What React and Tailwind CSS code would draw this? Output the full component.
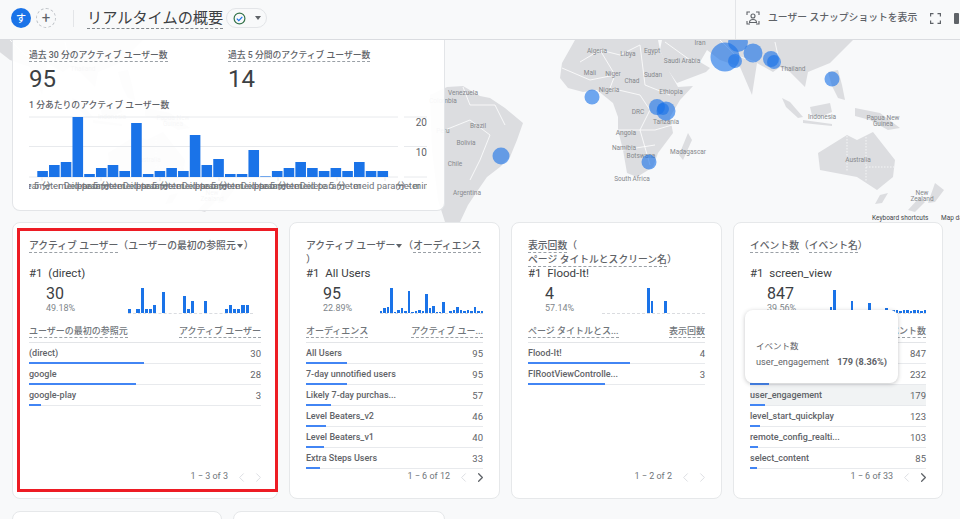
import { ChevronLeft, ChevronRight } from "lucide-react";

const perMinute = [2, 4, 5, 20, 1, 3, 4, 2, 18, 1, 2, 3, 2, 14, 4, 6, 1, 1, 9, 0, 2, 3, 5, 3, 2, 3, 2, 5, 2, 2];
const ticks = [42, 101, 160, 219, 278, 337];

const cards = [
  {
    title: (
      <>
        <Dotted>アクティブ ユーザー</Dotted>（ユーザーの最初の参照元<Caret />）
      </>
    ),
    top: "(direct)",
    value: "30",
    pct: "49.18%",
    spark: [4, 0, 4, 25, 4, 4, 8, 0, 21, 0, 0, 0, 0, 17, 4, 12, 0, 0, 12, 0, 0, 0, 0, 4, 8, 4, 4, 8, 8, 0],
    sparkClass: "w-[125px] mr-[8px]",
    colA: "ユーザーの最初の参照元",
    colB: "アクティブ ユーザー",
    rows: [
      ["(direct)", "30", 115],
      ["google", "28", 107],
      ["google-play", "3", 12],
    ],
    range: "1 − 3 of 3",
    more: false,
  },
  {
    title: (
      <>
        アクティブ ユーザー
        <Caret />（<Dotted>オーディエンス</Dotted>
        <br />）
      </>
    ),
    top: "All Users",
    value: "95",
    pct: "22.89%",
    spark: [2, 5, 6, 25, 1, 3, 5, 2, 22, 1, 2, 3, 2, 19, 5, 7, 1, 1, 11, 0, 2, 3, 6, 3, 2, 3, 2, 6, 2, 2],
    sparkClass: "w-[103px]",
    colA: "オーディエンス",
    colB: "アクティブ ユー...",
    rows: [
      ["All Users", "95", 41],
      ["7-day unnotified users", "95", 41],
      ["Likely 7-day purchas...", "57", 25],
      ["Level Beaters_v2", "46", 20],
      ["Level Beaters_v1", "40", 18],
      ["Extra Steps Users", "33", 14],
    ],
    range: "1 − 6 of 12",
    more: true,
  },
  {
    title: (
      <>
        <Dotted>表示回数</Dotted>（
        <br />
        <Dotted>ページ タイトルとスクリーン名</Dotted>）
      </>
    ),
    top: "Flood-It!",
    value: "4",
    pct: "57.14%",
    spark: [0, 0, 0, 0, 0, 0, 0, 0, 0, 0, 0, 0, 0, 25, 12, 0, 0, 0, 12, 0, 0, 0, 0, 0, 0, 0, 0, 0, 0, 0],
    sparkClass: "w-[103px]",
    colA: "ページ タイトルとス...",
    colB: "表示回数",
    rows: [
      ["Flood-It!", "4", 102],
      ["FIRootViewControlle...", "3", 77],
    ],
    range: "1 − 2 of 2",
    more: false,
  },
  {
    title: (
      <>
        <Dotted>イベント数</Dotted>（<Dotted>イベント名</Dotted>）
      </>
    ),
    top: "screen_view",
    value: "847",
    pct: "39.56%",
    spark: [0, 0, 6, 23, 1, 1, 1, 1, 12, 1, 1, 1, 1, 10, 1, 1, 1, 1, 5, 1, 3, 3, 2, 3, 3, 2, 3, 3, 2, 3],
    sparkClass: "w-[103px]",
    colA: "イベント名",
    colB: "イベント数",
    rows: [
      ["screen_view", "847", 60],
      ["session_start", "232", 19],
      ["user_engagement", "179", 15, true],
      ["level_start_quickplay", "123", 10],
      ["remote_config_realti...", "103", 8],
      ["select_content", "85", 7],
    ],
    range: "1 − 6 of 33",
    more: true,
  },
];

function Dotted({ children }) {
  return <span className="border-b border-dashed border-[#9aa0a6] pb-[1px]">{children}</span>;
}

function Caret() {
  return <span className="inline-block w-0 h-0 mx-[1px] align-middle border-x-[3px] border-x-transparent border-t-[4px] border-t-[#5f6368]" />;
}

function MapLand() {
  const labels = [
    ["Algeria", 597, 50], ["Libya", 628, 53], ["Egypt", 652, 50], ["Saudi Arabia", 682, 60], ["Iran", 700, 42],
    ["Mali", 590, 72], ["Niger", 613, 73], ["Chad", 632, 80], ["Sudan", 653, 74], ["Nigeria", 609, 89],
    ["Ethiopia", 671, 91], ["DRC", 638, 111], ["Tanzania", 666, 121], ["Angola", 626, 132], ["Namibia", 624, 147],
    ["Botswana", 641, 155], ["Madagascar", 688, 151], ["South Africa", 632, 178], ["Indonesia", 822, 116],
    ["Papua New", 883, 117], ["Guinea", 883, 123], ["Thailand", 793, 68], ["Australia", 858, 159],
    ["New", 922, 192], ["Zealand", 922, 198], ["Brazil", 478, 125], ["Venezuela", 463, 92], ["Colombia", 443, 100],
    ["Peru", 443, 130], ["Bolivia", 466, 142], ["Chile", 455, 163], ["Argentina", 467, 192],
  ];
  return (
    <>
      <g fill="#dcdde0" stroke="none">
        {/* south america */}
        <polygon points="430,95 447,87 463,86 480,96 490,98 505,108 523,123 517,140 510,157 500,167 487,177 478,190 468,205 460,222 445,222 438,200 432,150" />
        {/* africa */}
        <polygon points="575,40 562,63 560,78 568,88 583,92 597,90 613,103 618,117 618,130 623,150 627,173 637,177 653,167 658,153 673,133 670,117 680,100 693,86 678,87 670,73 660,50 658,40" />
        <polygon points="688,133 692,140 683,160 679,155" />
        {/* middle east and asia */}
        <polygon points="662,40 853,40 830,63 808,72 805,87 790,72 780,67 773,72 757,63 752,95 740,67 720,60 707,50 700,62 710,68 706,72 677,83 668,70 660,50" />
        {/* islands */}
        <polygon points="782,98 790,102 803,117 798,118 786,107" />
        <polygon points="810,107 830,103 832,112 820,117 812,115" />
        <polygon points="803,120 832,124 832,126 803,123" />
        <polygon points="828,72 838,70 842,85 845,100 838,98 832,86" />
        <polygon points="855,108 880,113 900,128 888,130 870,120 855,116" />
        <polygon points="818,153 847,135 857,140 873,132 895,160 893,177 877,190 857,177 820,170" />
        <polygon points="880,195 888,193 882,203 875,204" />
        <polygon points="935,183 944,190 935,202 928,203" />
        <polygon points="919,198 925,202 915,212 908,210" />
      </g>
      <g fill="none" stroke="#ffffff" strokeWidth="0.8">
        <polyline points="445,130 470,120 490,135 480,160 470,180" />
        <polyline points="463,87 470,105 495,105 505,125" />
        <polyline points="580,62 600,50 620,55 640,45" />
        <polyline points="600,50 615,75 610,88 640,95 650,110 640,130 650,165" />
        <polyline points="640,45 645,85 670,95" />
        <polyline points="618,130 655,130 672,125" />
        <polyline points="623,150 655,145" />
        <polyline points="562,68 590,80 615,75" />
        <polyline points="665,42 690,60 700,62" />
        <polyline points="720,40 735,55 755,62" />
        <polyline points="775,42 780,65" />
      </g>
      <g fill="none" stroke="#ffffff" strokeWidth="0.7" strokeDasharray="1.5 1.5">
        <polyline points="847,136 847,171" />
        <polyline points="866,137 866,182" />
        <polyline points="866,167 894,167" />
      </g>
      <g fill="#85888c" fontSize="6.5" textAnchor="middle">
        {labels.map(([name, x, y]) => (
          <text key={name} x={x} y={y + 2.5}>
            {name}
          </text>
        ))}
      </g>
    </>
  );
}

function WorldMap() {
  const bubbles = [
    [725, 57, 14.5], [738, 42, 10], [735, 61, 7], [753, 53, 9.5], [771, 59, 8], [774, 62, 7], [832, 79, 7.5],
    [592, 97, 7.5], [657, 107, 8], [663, 109, 6], [666, 111, 9.5], [501, 156, 8.5], [649, 162, 7.5],
  ];
  return (
    <svg className="absolute left-0 top-0" width="960" height="519" viewBox="0 0 960 519">
      <MapLand />
      <g transform="translate(-710 0)">
        <MapLand />
      </g>
      {bubbles.map(([x, y, r]) => (
        <circle key={`${x}-${y}`} cx={x} cy={y} r={r} fill="#1a73e8" fillOpacity="0.62" />
      ))}
      <rect x="868" y="213" width="92" height="8" fill="#f8f9fa" />
      <text x="872" y="220" fontSize="6.5" fill="#44474a">Keyboard shortcuts</text>
      <text x="941" y="220" fontSize="6.5" fill="#44474a">Map data</text>
    </svg>
  );
}

function MinuteChart() {
  return (
    <svg className="block" width="400" height="85" viewBox="29 111 400 85">
      <g stroke="#e8eaed" strokeWidth="1">
        <line x1="29" x2="398" y1="117" y2="117" />
        <line x1="29" x2="398" y1="146.5" y2="146.5" />
        <line x1="29" x2="398" y1="177" y2="177" />
        <line x1="404" x2="427" y1="117" y2="117" />
        <line x1="404" x2="427" y1="146.5" y2="146.5" />
        <line x1="404" x2="427" y1="177" y2="177" />
        {[...ticks, 385].map((x) => (
          <line key={x} x1={x} x2={x} y1="177" y2="181" />
        ))}
      </g>
      {perMinute.map((v, i) => (
        <rect key={i} x={37.3 + i * 11.73} y={177 - (v || 0.2) * 3} width="10.6" height={(v || 0.2) * 3} fill="#1a73e8" />
      ))}
      <text x="427" y="126" textAnchor="end" fontSize="10" fill="#5f6368">20</text>
      <text x="427" y="156" textAnchor="end" fontSize="10" fill="#5f6368">10</text>
      <svg x="29" y="178" width="398" height="14" viewBox="29 178 398 14">
        <g fontSize="9.5" fill="#70757a" textAnchor="middle">
          {ticks.map((x) => (
            <text key={x} x={x} y="189">parameter Delete 5 分 - meid parameter</text>
          ))}
          <text x="396" y="189" textAnchor="start">分 - minute parameter</text>
        </g>
      </svg>
    </svg>
  );
}

function Sparkline({ data, className }) {
  return (
    <div className={`flex items-end h-[25px] gap-[1px] border-b border-dashed border-[#dadce0] ${className}`}>
      {data.map((h, i) => (
        <div key={i} className="flex-1 bg-[#1a73e8]" style={{ height: h }} />
      ))}
    </div>
  );
}

function ReportCard({ card }) {
  return (
    <section className="flex flex-col h-[277px] min-w-0 overflow-hidden bg-white border border-[#e6e8ea] rounded-lg px-4 pt-4 pb-[14px] text-[#5f6368]">
      <h3 className="h-[27px] text-[9.8px] leading-[13.5px] font-medium whitespace-nowrap">{card.title}</h3>
      <p className="h-[14px] text-[11.5px] leading-[14px] text-[#3c4043] whitespace-nowrap">
        #1&nbsp; {card.top}
      </p>
      <div className="flex items-end justify-between h-[33px] mt-[1px]">
        <div className="pl-[17px]">
          <div className="text-[16px] leading-[17px] text-[#3c4043]">{card.value}</div>
          <div className="text-[9px] leading-[12px] text-[#80868b]">{card.pct}</div>
        </div>
        <Sparkline data={card.spark} className={card.sparkClass} />
      </div>
      <div className="flex justify-between h-[20px] mt-[9px] pt-[2px] border-b border-[#e3e5e8] text-[9px] font-medium text-[#70757a] whitespace-nowrap">
        <span><Dotted>{card.colA}</Dotted></span>
        <span><Dotted>{card.colB}</Dotted></span>
      </div>
      {card.rows.map(([name, count, width, active]) => (
        <div key={name} className={`flex flex-col h-[21px] ${active ? "bg-[#f1f3f4]" : ""}`}>
          <div className="flex justify-between h-[20px] pt-[3px] text-[9px] leading-[15px] whitespace-nowrap">
            <span className="font-medium">{name}</span>
            <span className="text-[9.5px]">{count}</span>
          </div>
          <div className="h-[1px] bg-[#e8eaed] relative">
            <div className="h-[2px] -mt-[1px] bg-[#4285f4]" style={{ width }} />
          </div>
        </div>
      ))}
      <div className="flex items-center justify-end gap-[2px] mt-auto h-[14px] text-[9px] text-[#70757a]">
        <span className="mr-[4px]">{card.range}</span>
        <ChevronLeft size={15} strokeWidth={1.5} className="text-[#dadce0]" />
        <ChevronRight size={15} strokeWidth={card.more ? 2 : 1.5} className={`-mr-[5px] ${card.more ? "text-[#5f6368]" : "text-[#dadce0]"}`} />
      </div>
    </section>
  );
}

export default function App() {
  return (
    <div className="relative w-[960px] h-[519px] overflow-hidden bg-[#f8f9fa] font-[Roboto,'Noto_Sans_CJK_JP',sans-serif]">
      <WorldMap />

      <header className="relative flex items-center justify-between h-[40px] pb-[3px] bg-[#f8f9fa] border-b border-[#dadce0]">
        <div className="flex items-center pl-[11px]">
          <span className="flex items-center justify-center w-5 h-5 rounded-full bg-[#1a73e8] text-white text-[10px] font-medium">す</span>
          <span className="flex items-center justify-center w-5 h-5 ml-[5px] rounded-full border border-dashed border-[#bdc1c6] text-[#5f6368] text-[15px] leading-none">+</span>
          <span className="w-[1px] h-[17px] ml-[17px] mr-[13px] bg-[#e3e5e8]" />
          <h1 className="text-[15.2px] leading-[20px] text-[#3c4043] border-b-[1.5px] border-dashed border-[#80868b] whitespace-nowrap">リアルタイムの概要</h1>
          <span className="flex items-center w-[41px] gap-[8px] h-[20px] ml-[3px] pl-[6px] rounded-full border border-[#e3e5e8]">
            <svg className="shrink-0" width="13" height="13" viewBox="0 0 13 13" fill="none">
              <circle cx="6.5" cy="6.5" r="5.4" stroke="#34734a" strokeWidth="1.2" />
              <path d="M3.8 6.6 5.8 8.6 9.3 4.8" stroke="#1a73e8" strokeWidth="1.2" />
            </svg>
            <Caret />
          </span>
        </div>
        <div className="flex items-center self-stretch -mb-[3px] pb-[3px] shrink-0 w-[225px] border-l border-[#e3e5e8] pl-[10px] text-[#5f6368] whitespace-nowrap">
          <svg className="shrink-0" width="14" height="14" viewBox="0 0 14 14" fill="none" stroke="#5f6368" strokeWidth="1.1">
            <path d="M1 4V1h3M10 1h3v3M1 10v3h3M10 13h3v-3" />
            <circle cx="7" cy="5" r="2" />
            <path d="M3.5 11.5c0-2 1.5-3 3.5-3s3.5 1 3.5 3z" />
          </svg>
          <span className="ml-[8px] text-[9.8px] font-medium">ユーザー スナップショットを表示</span>
          <svg className="ml-[13px] shrink-0" width="11" height="11" viewBox="0 0 11 11" fill="none" stroke="#5f6368" strokeWidth="1.2">
            <path d="M.6 3.5V.6h2.9M7.5.6h2.9v2.9M.6 7.5v2.9h2.9M7.5 10.4h2.9V7.5" />
          </svg>
          <span className="ml-[13px] shrink-0 w-[5px] h-[11px] rounded-[1px] bg-[#5f6368]" />
        </div>
      </header>

      <main className="relative flex flex-col gap-[11px] px-3">
        <section className="w-[433px] h-[171px] px-4 pt-[9px] bg-white/[0.93] border border-t-0 border-[#e3e5e8] rounded-b-lg text-[#5f6368]">
          <div className="flex">
            <div className="w-[199px]">
              <div className="text-[8.8px] leading-[13px] font-medium whitespace-nowrap"><Dotted>過去 30 分のアクティブ ユーザー数</Dotted></div>
              <div className="text-[24px] leading-[30px] mt-[2px] text-[#3c4043]">95</div>
            </div>
            <div>
              <div className="text-[8.8px] leading-[13px] font-medium whitespace-nowrap"><Dotted>過去 5 分間のアクティブ ユーザー数</Dotted></div>
              <div className="text-[24px] leading-[30px] mt-[2px] text-[#3c4043]">14</div>
            </div>
          </div>
          <p className="mt-[5px] text-[8.8px] leading-[12px] font-medium">1 分あたりのアクティブ ユーザー数</p>
          <MinuteChart />
        </section>

        <div className="grid grid-cols-[266px_211px_211px_210px] gap-x-[11px]">
          {cards.map((card) => (
            <ReportCard key={card.top} card={card} />
          ))}
        </div>

        <div className="flex gap-[11px] mt-[1px]">
          <div className="w-[210px] h-[40px] bg-white border border-[#e6e8ea] rounded-lg" />
          <div className="w-[212px] h-[40px] bg-white border border-[#e6e8ea] rounded-lg" />
        </div>
      </main>

      {/* highlight drawn over the first card */}
      <div className="absolute left-[17px] top-[228px] w-[261px] h-[264px] border-[3px] border-[#ed1c24]" />

      {/* hover tooltip */}
      <div className="absolute left-[745px] top-[310px] w-[153px] h-[73px] pt-[30px] px-[11px] bg-white rounded-lg shadow-[0_1px_4px_rgba(60,64,67,0.3)] text-[#5f6368]">
        <div className="text-[8.5px] leading-[13px]">イベント数</div>
        <div className="flex justify-between mt-[2px] text-[9.2px] leading-[14px] whitespace-nowrap">
          <span>user_engagement</span>
          <span className="font-bold">179 (8.36%)</span>
        </div>
      </div>
    </div>
  );
}
